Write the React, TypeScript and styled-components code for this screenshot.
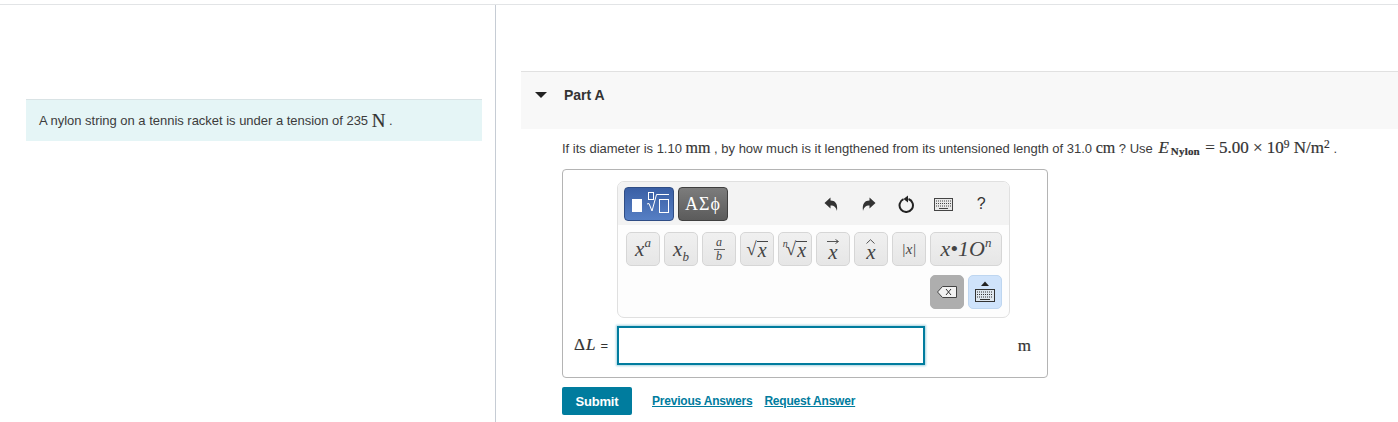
import React from "react";
import styled, { createGlobalStyle } from "styled-components";

const Global = createGlobalStyle`
  html, body { margin: 0; padding: 0; background: #fff; }
  body { font-family: "Liberation Sans", Arial, sans-serif; color: #333; overflow: hidden; }
`;
const serif = `"Liberation Serif", "Times New Roman", serif`;

const Page = styled.div`
  width: 1398px; height: 422px; padding-top: 4px; box-sizing: border-box; overflow: hidden;
`;
const Columns = styled.div`
  display: grid; grid-template-columns: 496px 1fr; height: 418px; border-top: 1px solid #e2e4e6;
`;
const LeftCol = styled.div`
  border-right: 1px solid #c6ccd4; padding: 94px 13px 0 26px;
`;
const Callout = styled.div`
  height: 42px; box-sizing: border-box; background: #e5f5f6; border-top: 1px solid #d9e3e5; padding-left: 13px;
  display: flex; align-items: center; font-size: 13px; color: #3c3c3c; white-space: pre; letter-spacing: -0.02px;
`;
const RightCol = styled.div`
  padding: 66px 0 0 25px; display: flex; flex-direction: column;
`;
const PartHeader = styled.div`
  background: #f8f8f8; border-top: 1px solid #e1e1e1; display: flex; align-items: center;
  padding: 0 0 12px 14px; box-sizing: border-box; height: 58px;
  font-size: 14px; font-weight: 700; color: #333; gap: 17px;
`;
const Caret = styled.span`
  width: 0; height: 0; border-left: 6.5px solid transparent; border-right: 6.5px solid transparent; border-top: 6px solid #222;
`;
const Question = styled.div`
  margin: 9px 0 0 41px; height: 20px; display: flex; align-items: center; font-size: 13px; color: #3c3c3c; white-space: pre;
`;
const M = styled.span<{ $size?: number; $bold?: boolean; $italic?: boolean }>`
  font-family: ${serif}; font-size: ${(p) => p.$size ?? 15}px; color: #333;
  -webkit-text-stroke: 0.2px #333;
  font-style: ${(p) => (p.$italic ? "italic" : "normal")};
  font-weight: ${(p) => (p.$bold ? 700 : 400)};
  sup { font-size: 11.5px; line-height: 0; position: relative; top: 2px; vertical-align: super; }
`;
const Symbol = styled(M)`
  margin: 0 2px;
`;
const SubText = styled(M)`
  align-self: flex-end; margin-bottom: 1px; letter-spacing: 0.2px;
`;
const Equation = styled(M)`
  margin-left: 1px;
`;
const Delta = styled(M)`
  letter-spacing: 1px;
`;
const AnswerBox = styled.div`
  margin: 11px 0 0 41px; width: 486px; height: 209px; box-sizing: border-box;
  border: 1px solid #b4b4b4; border-radius: 4px; padding: 11px 0 0 54px;
  display: grid; grid-template-columns: 308px 1fr; grid-template-rows: 137px 39px; row-gap: 8px; position: relative;
`;
const Toolbar = styled.div`
  grid-column: 1 / 3; width: 393px; height: 137px; box-sizing: border-box;
  border: 1px solid #e0e0e0; border-radius: 7px; overflow: hidden; background: #fdfdfd;
`;
const TopRow = styled.div`
  height: 43px; background: #f3f3f3; display: flex; align-items: flex-start; padding: 5px 0 0 6px; box-sizing: border-box;
`;
const Template = styled.div<{ $blue?: boolean }>`
  width: 50px; height: 34px; box-sizing: border-box; margin-right: 4px; border-radius: 4px;
  border: 1px solid ${(p) => (p.$blue ? "#2f4d85" : "#3f3f3f")};
  background: ${(p) => (p.$blue ? "linear-gradient(#3a5fa5,#567fc4)" : "linear-gradient(#7c7c7c,#5b5b5b)")};
  color: #fff; font-family: ${serif}; font-size: 18px; letter-spacing: 1px;
  display: flex; align-items: center; justify-content: center;
`;
const Tools = styled.div`
  display: flex; margin-left: auto; padding-right: 9px; height: 34px;
`;
const Tool = styled.div`
  width: 37.5px; height: 34px; display: flex; align-items: center; justify-content: center; color: #333;
  font-size: 16px;
`;
const ButtonRow = styled.div<{ $end?: boolean }>`
  display: flex; gap: 4px; padding: 0 7px 0 8px; margin-top: ${(p) => (p.$end ? 9 : 7)}px;
  justify-content: ${(p) => (p.$end ? "flex-end" : "flex-start")};
`;
const Key = styled.div<{ $w?: number; $tone?: "grey" | "blue"; $size?: number }>`
  width: ${(p) => p.$w ?? 34}px; height: 34px; box-sizing: border-box; border-radius: 5px;
  border: 1px solid ${(p) => (p.$tone === "grey" ? "#aeaeae" : p.$tone === "blue" ? "#bed6f0" : "#d6d6d6")};
  background: ${(p) => (p.$tone === "grey" ? "#aeaeae" : p.$tone === "blue" ? "#cfe3fb" : "linear-gradient(#f0f0f0,#e6e6e6)")};
  display: flex; align-items: center; justify-content: center; color: #444;
  font-family: ${serif}; font-style: italic; font-size: ${(p) => p.$size ?? 21}px;
  sup { font-size: 13px; line-height: 0; position: relative; top: -1px; }
  sub { font-size: 13px; line-height: 0; }
`;
const Frac = styled.div`
  display: flex; flex-direction: column; align-items: center; font-size: 12px; line-height: 11px;
  hr { width: 11px; margin: 1px 0; border: 0; border-top: 1px solid #666; }
`;
const Accent = styled.div`
  display: flex; flex-direction: column; align-items: center; gap: 1px;
`;
const Base = styled.span`
  line-height: 15px;
`;
const Radical = styled.span`
  font-style: normal; font-size: 19px;
`;
const Index = styled.span`
  font-size: 10px; align-self: flex-start; margin-top: 6px; margin-right: -2px; line-height: 10px;
`;
const Overline = styled.span`
  border-top: 1px solid #444; padding: 0 1px; line-height: 16px; font-size: 20px;
`;
const AnswerLabel = styled.div`
  position: absolute; left: 11px; top: 165px; height: 20px; display: flex; align-items: center; gap: 4px; font-size: 13px; color: #333;
`;
const Input = styled.div`
  width: 308px; height: 39px; box-sizing: border-box; border: 2px solid #007c9e; box-shadow: 0 0 2px 1px #a5d3e0; background: #fff;
`;
const Unit = styled.div`
  display: flex; align-items: center; justify-content: flex-end; padding-right: 16px; padding-top: 1px;
`;
const Actions = styled.div`
  margin: 9px 0 0 41px; display: flex; align-items: center; font-size: 12px;
`;
const Submit = styled.div`
  width: 70px; height: 28px; background: #007c9e; color: #fff; border-radius: 2px; font-size: 13px; font-weight: 700;
  display: flex; align-items: center; justify-content: center; margin-right: 20px; letter-spacing: -0.2px;
`;
const ActionLink = styled.span`
  color: #007c9e; font-weight: 700; text-decoration: underline; margin-right: 12px; letter-spacing: -0.2px;
`;

const KeyboardIcon = () => (
  <svg width="19" height="13" viewBox="0 0 19 13">
    <rect x="0.5" y="0.5" width="18" height="12" fill="#e8e8e8" stroke="#444" />
    <path d="M2 3h15M2 5.5h15M2 8h15" stroke="#444" strokeWidth="1.2" strokeDasharray="1 1" />
    <path d="M5 10.5h9" stroke="#444" strokeWidth="1.2" />
  </svg>
);
const TemplateIcon = () => (
  <svg width="46" height="32" viewBox="0 0 46 32">
    <rect x="6" y="11" width="10" height="13" fill="#fff" />
    <rect x="22.5" y="4.5" width="5" height="7" fill="none" stroke="#fff" />
    <path d="M21 16l2-0.5 3 7.5 4.5-16.5H43" fill="none" stroke="#fff" />
    <rect x="33.5" y="11.5" width="9" height="13" fill="none" stroke="#fff" />
  </svg>
);
const Undo = ({ flip }: { flip?: boolean }) => (
  <svg width="14" height="14" viewBox="0 0 14 14" style={flip ? { transform: "scaleX(-1)" } : undefined}>
    <path d="M0.5 6L6.5 0.5V3.6C11 3.6 14 6.5 13 14C12 10.5 10.5 8.6 6.5 8.6V11.5Z" fill="#333" />
  </svg>
);
const Reload = () => (
  <svg width="17" height="18" viewBox="0 0 17 18">
    <path d="M5.5 4.2A6.7 6.7 0 1 0 10.5 4" fill="none" stroke="#222" strokeWidth="2" />
    <path d="M10 0.5L10 7.5L5.5 4Z" fill="#222" />
  </svg>
);
const Backspace = () => (
  <svg width="20" height="12" viewBox="0 0 20 12">
    <path d="M5.5 0.5H19.5V11.5H5.5L0.5 6Z" fill="#f2f2f2" stroke="#444" />
    <path d="M9 3l5 6M14 3l-5 6" stroke="#333" />
  </svg>
);
const KeyboardToggle = () => (
  <svg width="20" height="22" viewBox="0 0 20 22">
    <path d="M6 5L10 0.5L14 5Z" fill="#222" />
    <rect x="0.5" y="8.5" width="19" height="12" fill="#dfe7ef" stroke="#333" />
    <path d="M2 11h16M2 13.5h16M2 16h16" stroke="#333" strokeWidth="1.2" strokeDasharray="1 1" />
    <path d="M5 18.5h10" stroke="#333" strokeWidth="1.2" />
  </svg>
);
const VectorArrow = () => (
  <svg width="12" height="5" viewBox="0 0 12 5">
    <path d="M0 2.5H11M8.5 0.5L11.5 2.5L8.5 4.5" fill="none" stroke="#444" strokeWidth="0.9" />
  </svg>
);
const Hat = () => (
  <svg width="9" height="5" viewBox="0 0 9 5">
    <path d="M0.5 4.5L4.5 0.7L8.5 4.5" fill="none" stroke="#444" strokeWidth="0.9" />
  </svg>
);

export default function App() {
  return (
    <Page>
      <Global />
      <Columns>
        <LeftCol>
          <Callout>
            A nylon string on a tennis racket is under a tension of 235 <M $size={19}>N</M> .
          </Callout>
        </LeftCol>
        <RightCol>
          <PartHeader>
            <Caret />
            Part A
          </PartHeader>
          <Question>
            If its diameter is 1.10 <M $size={16}>mm</M> , by how much is it lengthened from its untensioned length of 31.0 <M $size={16}>cm</M> ? Use{" "}
            <Symbol $size={17} $italic>E</Symbol><SubText $bold $size={11}>Nylon</SubText>
            <Equation $size={17}> = 5.00 × 10<sup>9</sup> N/m<sup>2</sup></Equation> .
          </Question>
          <AnswerBox>
            <Toolbar>
              <TopRow>
                <Template $blue><TemplateIcon /></Template>
                <Template>ΑΣϕ</Template>
                <Tools>
                  <Tool><Undo /></Tool>
                  <Tool><Undo flip /></Tool>
                  <Tool><Reload /></Tool>
                  <Tool><KeyboardIcon /></Tool>
                  <Tool>?</Tool>
                </Tools>
              </TopRow>
              <ButtonRow>
                <Key><span>x<sup>a</sup></span></Key>
                <Key><span>x<sub>b</sub></span></Key>
                <Key><Frac><span>a</span><hr /><span>b</span></Frac></Key>
                <Key><Radical>√</Radical><Overline>x</Overline></Key>
                <Key><Index>n</Index><Radical>√</Radical><Overline>x</Overline></Key>
                <Key><Accent><VectorArrow /><Base>x</Base></Accent></Key>
                <Key><Accent><Hat /><Base>x</Base></Accent></Key>
                <Key $size={15}>|x|</Key>
                <Key $w={72} $size={22}><span>x•1O<sup>n</sup></span></Key>
              </ButtonRow>
              <ButtonRow $end>
                <Key $tone="grey"><Backspace /></Key>
                <Key $tone="blue"><KeyboardToggle /></Key>
              </ButtonRow>
            </Toolbar>
            <AnswerLabel>
              <Delta $size={17}>Δ<i>L</i></Delta> =
            </AnswerLabel>
            <Input />
            <Unit><M $size={17}>m</M></Unit>
          </AnswerBox>
          <Actions>
            <Submit>Submit</Submit>
            <ActionLink>Previous Answers</ActionLink>
            <ActionLink>Request Answer</ActionLink>
          </Actions>
        </RightCol>
      </Columns>
    </Page>
  );
}
